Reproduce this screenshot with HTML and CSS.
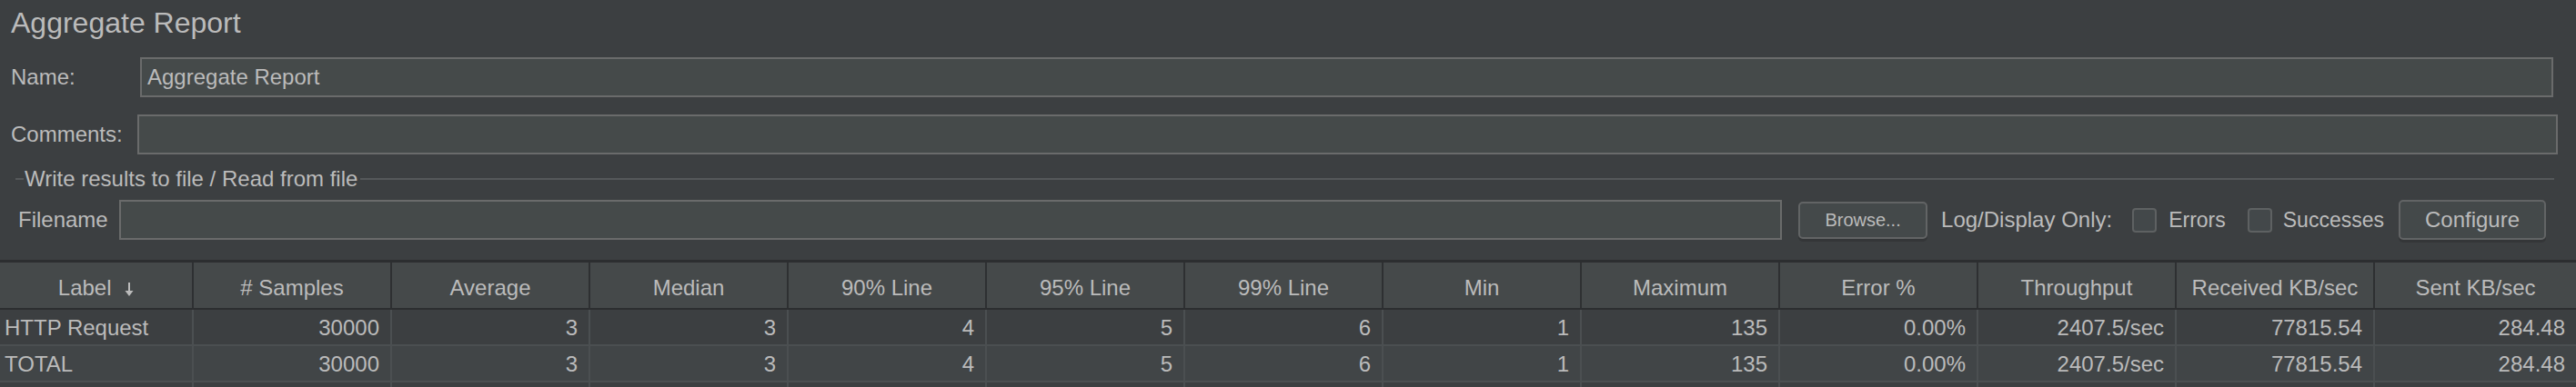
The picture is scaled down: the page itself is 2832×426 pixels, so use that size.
FILE: index.html
```html
<!DOCTYPE html>
<html>
<head>
<meta charset="utf-8">
<link rel="stylesheet" href="styles.css">
</head>
<body>
<div class="page">
  <div class="title">Aggregate Report</div>

  <div class="form-row name-row">
    <div class="lbl lbl-name">Name:</div>
    <div class="field">Aggregate Report</div>
  </div>

  <div class="form-row comments-row">
    <div class="lbl lbl-comments">Comments:</div>
    <div class="field"></div>
  </div>

  <div class="legend">
    <span class="legend-dash"></span>
    <span class="legend-text">Write results to file / Read from file</span>
    <span class="legend-line"></span>
  </div>

  <div class="form-row file-row">
    <div class="lbl lbl-file">Filename</div>
    <div class="field"></div>
    <div class="btn btn-browse">Browse...</div>
    <div class="log-label">Log/Display Only:</div>
    <div class="check check-errors"></div>
    <div class="check-label check-label-errors">Errors</div>
    <div class="check check-success"></div>
    <div class="check-label check-label-success">Successes</div>
    <div class="btn btn-config">Configure</div>
  </div>

  <div class="table">
    <div class="thead">
      <div class="th">Label <svg class="sort-arrow" width="10" height="15" viewBox="0 0 10 15"><rect x="4" y="0" width="2" height="11" fill="#bbbbbb"/><polygon points="0.5,9 9.5,9 5,15" fill="#bbbbbb"/></svg></div>
      <div class="th"># Samples</div>
      <div class="th">Average</div>
      <div class="th">Median</div>
      <div class="th">90% Line</div>
      <div class="th">95% Line</div>
      <div class="th">99% Line</div>
      <div class="th">Min</div>
      <div class="th">Maximum</div>
      <div class="th">Error %</div>
      <div class="th">Throughput</div>
      <div class="th">Received KB/sec</div>
      <div class="th">Sent KB/sec</div>
    </div>
    <div class="tr">
      <div class="td td-left">HTTP Request</div>
      <div class="td">30000</div>
      <div class="td">3</div>
      <div class="td">3</div>
      <div class="td">4</div>
      <div class="td">5</div>
      <div class="td">6</div>
      <div class="td">1</div>
      <div class="td">135</div>
      <div class="td">0.00%</div>
      <div class="td">2407.5/sec</div>
      <div class="td">77815.54</div>
      <div class="td">284.48</div>
    </div>
    <div class="tr tr-alt">
      <div class="td td-left">TOTAL</div>
      <div class="td">30000</div>
      <div class="td">3</div>
      <div class="td">3</div>
      <div class="td">4</div>
      <div class="td">5</div>
      <div class="td">6</div>
      <div class="td">1</div>
      <div class="td">135</div>
      <div class="td">0.00%</div>
      <div class="td">2407.5/sec</div>
      <div class="td">77815.54</div>
      <div class="td">284.48</div>
    </div>
    <div class="tr">
      <div class="td"></div><div class="td"></div><div class="td"></div><div class="td"></div>
      <div class="td"></div><div class="td"></div><div class="td"></div><div class="td"></div>
      <div class="td"></div><div class="td"></div><div class="td"></div><div class="td"></div>
      <div class="td"></div>
    </div>
  </div>
</div>
</body>
</html>
```

FILE: styles.css
```css
html, body {
  margin: 0;
  padding: 0;
}

body {
  background: #3c3f41;
  color: #bbbbbb;
  font-family: "Liberation Sans", Arial, sans-serif;
  width: 2832px;
  height: 426px;
  overflow: hidden;
}

.page {
  width: 2832px;
  height: 426px;
  overflow: hidden;
}

.title {
  font-size: 32px;
  line-height: 36px;
  height: 36px;
  padding: 7px 0 0 12px;
  white-space: nowrap;
}

.form-row {
  display: flex;
  align-items: center;
  height: 44px;
}

.name-row {
  margin-top: 20px;
  padding-right: 25px;
}

.comments-row {
  margin-top: 19px;
  padding-right: 20px;
}

.lbl {
  font-size: 24px;
  box-sizing: border-box;
  white-space: nowrap;
  flex: none;
}

.lbl-name {
  width: 154px;
  padding-left: 12px;
}

.lbl-comments {
  width: 151px;
  padding-left: 12px;
}

.lbl-file {
  width: 131px;
  padding-left: 20px;
}

.field {
  flex: 1;
  height: 44px;
  box-sizing: border-box;
  border: 2px solid #6a6b6b;
  background: #454a4a;
  display: flex;
  align-items: center;
  padding-left: 6px;
  font-size: 24px;
  white-space: nowrap;
}

.legend {
  margin-top: 13px;
  height: 27px;
  display: flex;
  align-items: center;
  padding-left: 17px;
  padding-right: 24px;
}

.legend-dash {
  width: 9px;
  height: 2px;
  background: #55585a;
  flex: none;
}

.legend-text {
  font-size: 24px;
  line-height: 27px;
  margin-left: 1px;
  white-space: nowrap;
}

.legend-line {
  flex: 1;
  height: 2px;
  background: #55585a;
  margin-left: 3px;
}

.file-row {
  margin-top: 10px;
  padding-right: 33px;
}

.btn {
  flex: none;
  box-sizing: border-box;
  border: 2px solid #626465;
  border-radius: 5px;
  background: #44494a;
  display: flex;
  align-items: center;
  justify-content: center;
  box-shadow: 0 3px 0 #343638;
  white-space: nowrap;
}

.btn-browse {
  margin-left: 18px;
  width: 142px;
  height: 41px;
  font-size: 20px;
}

.btn-config {
  margin-left: 16px;
  width: 162px;
  height: 44px;
  font-size: 24px;
}

.log-label {
  margin-left: 15px;
  font-size: 24px;
  white-space: nowrap;
}

.check {
  flex: none;
  width: 27px;
  height: 27px;
  box-sizing: border-box;
  border: 2px solid #5e6162;
  border-radius: 4px;
  background: #43484a;
}

.check-errors {
  margin-left: 22px;
}

.check-success {
  margin-left: 24px;
}

.check-label {
  font-size: 23px;
  white-space: nowrap;
}

.check-label-errors {
  margin-left: 13px;
}

.check-label-success {
  margin-left: 12px;
}

.table {
  margin-top: 22px;
  border-top: 3px solid #2c2e30;
}

.thead,
.tr {
  display: grid;
  grid-template-columns: 213px repeat(11, 218px) 1fr;
}

.thead {
  background: #45494a;
  border-bottom: 2px solid #2c2e30;
}

.th {
  box-sizing: border-box;
  height: 50px;
  padding-top: 5px;
  line-height: 45px;
  font-size: 24px;
  text-align: center;
  border-right: 2px solid #2e3032;
  white-space: nowrap;
}

.th:last-child {
  border-right: none;
}

.sort-arrow {
  margin-left: 8px;
  vertical-align: -1px;
}

.tr {
  background: #3c3f41;
  border-bottom: 2px solid #4b4f51;
}

.tr-alt {
  background: #414547;
}

.td {
  box-sizing: border-box;
  height: 38px;
  padding-top: 1px;
  line-height: 37px;
  font-size: 24px;
  text-align: right;
  padding-right: 12px;
  border-right: 2px solid #4b4f51;
  white-space: nowrap;
}

.td:last-child {
  border-right: none;
}

.td-left {
  text-align: left;
  padding-left: 5px;
  padding-right: 0;
}
```
